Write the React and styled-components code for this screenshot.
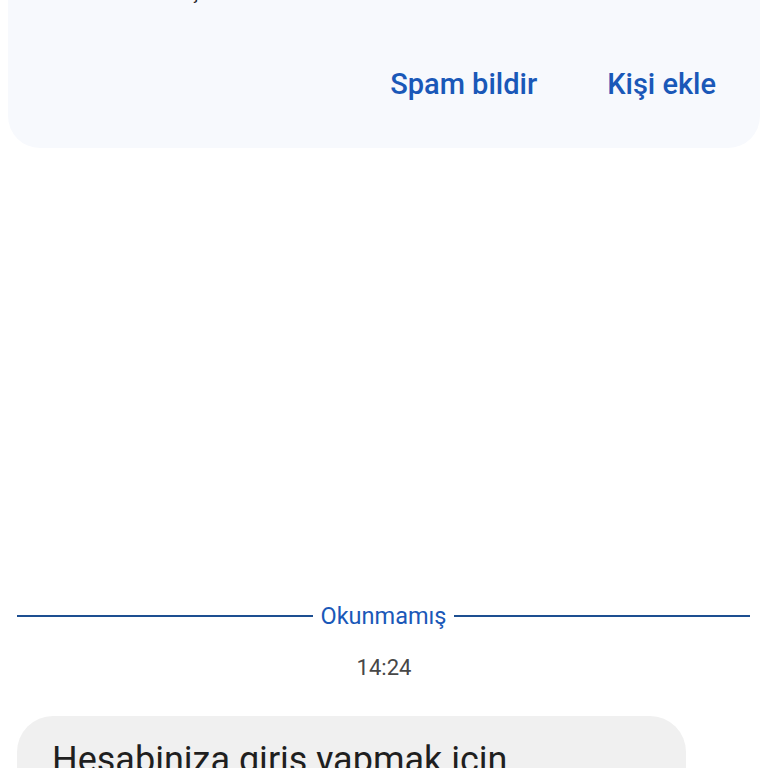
import React from "react";
import styled, { createGlobalStyle } from "styled-components";

const Global = createGlobalStyle`
    html, body {
        margin: 0;
        padding: 0;
        background: #ffffff;
        font-family: Roboto, "Noto Sans", "Liberation Sans", sans-serif;
        overflow: hidden;
    }
`

const Page = styled.div`
    width: 768px;
    height: 768px;
    overflow: hidden;
    display: flex;
    flex-direction: column;
    & > * {
        flex-shrink: 0;
    }
`

const Card = styled.div`
    margin: 0 8px;
    height: 148px;
    box-sizing: border-box;
    background: #f7f9fd;
    border-radius: 0 0 32px 32px;
    display: flex;
    flex-direction: column;
    overflow: hidden;
`

const CutLine = styled.div`
    margin-top: -21px;
    padding-left: 53px;
    height: 24px;
    font-size: 22px;
    line-height: 24px;
    color: #1f1f1f;
`

const Actions = styled.div`
    display: flex;
    justify-content: flex-end;
    gap: 70px;
    padding: 64px 44px 0 0;
`

const Action = styled.button`
    border: none;
    background: none;
    padding: 0;
    font-family: inherit;
    font-size: 29px;
    font-weight: 500;
    color: #1a58b8;
    line-height: 34px;
`

const Spacer = styled.div`
    height: 454px;
`

const Divider = styled.div`
    display: flex;
    align-items: center;
    gap: 8px;
    padding: 0 18px 0 17px;
    height: 28px;
`

const Rule = styled.div`
    flex: 1;
    height: 2px;
    background: #1d4f91;
`

const DividerLabel = styled.span`
    font-size: 23.5px;
    color: #1a58b8;
    line-height: 28px;
`

const Time = styled.div`
    margin-top: 24px;
    text-align: center;
    font-size: 22px;
    line-height: 28px;
    color: #474747;
`

const Bubble = styled.div`
    margin: 34px 0 0 17px;
    width: 669px;
    box-sizing: border-box;
    background: #f0f0f0;
    border-radius: 36px;
    padding: 21px 35px;
    font-size: 36px;
    line-height: 46px;
    color: #1f1f1f;
`

export default function App() {
    return (
        <Page>
            <Global />
            <Card>
                <CutLine>Bu numara kişi listenizde</CutLine>
                <Actions>
                    <Action>Spam bildir</Action>
                    <Action>Kişi ekle</Action>
                </Actions>
            </Card>
            <Spacer />
            <Divider>
                <Rule />
                <DividerLabel>Okunmamış</DividerLabel>
                <Rule />
            </Divider>
            <Time>14:24</Time>
            <Bubble>Hesabiniza giriş yapmak için doğrulama kodunuz</Bubble>
        </Page>
    )
}
